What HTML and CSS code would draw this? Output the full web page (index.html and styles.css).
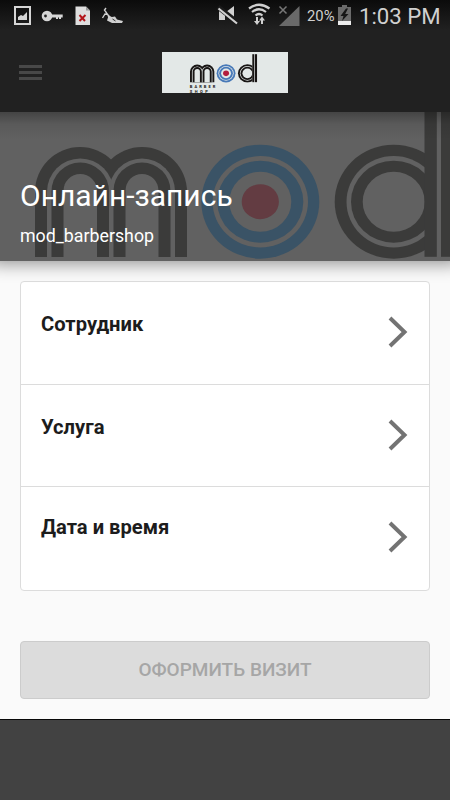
FILE: index.html
```html
<!DOCTYPE html>
<html lang="ru">
<head>
<meta charset="utf-8">
<title>Онлайн-запись</title>
<link rel="stylesheet" href="styles.css">
</head>
<body>
<svg class="defs" width="0" height="0" aria-hidden="true">
  <defs>
    <clipPath id="base"><rect x="0" y="-40" width="480" height="185"/></clipPath>
    <clipPath id="bowl"><rect x="330" y="0" width="95" height="149"/></clipPath>
    <g id="brand">
      <g clip-path="url(#base)">
        <g class="ink">
          <rect x="35" y="35" width="90" height="180" rx="45"/>
          <rect x="97" y="35" width="90" height="180" rx="45"/>
        </g>
        <g class="paper">
          <rect x="47" y="46.500" width="66.500" height="200" rx="33.200"/>
          <rect x="109" y="46.500" width="66" height="200" rx="33"/>
        </g>
        <g class="ink">
          <rect x="51.500" y="50.500" width="57.500" height="200" rx="28.700"/>
          <rect x="113.500" y="50.500" width="57" height="200" rx="28.500"/>
        </g>
        <g class="paper">
          <rect x="63.500" y="62" width="33.500" height="200" rx="16.700"/>
          <rect x="125.500" y="62" width="33" height="200" rx="16.500"/>
        </g>
      </g>
      <ellipse class="blue" cx="260.300" cy="89.700" rx="59" ry="57"/>
      <ellipse class="paper" cx="260.300" cy="89.700" rx="47.700" ry="45.700"/>
      <ellipse class="blue" cx="260.300" cy="89.700" rx="43" ry="41"/>
      <ellipse class="paper" cx="260.300" cy="89.700" rx="31" ry="30"/>
      <ellipse class="red" cx="260.300" cy="89.700" rx="18.600" ry="17.500"/>
      <g clip-path="url(#bowl)">
        <ellipse class="ink" cx="393.700" cy="89.700" rx="59" ry="57"/>
        <ellipse class="paper" cx="393.700" cy="89.700" rx="47.200" ry="45.700"/>
        <ellipse class="ink" cx="393.700" cy="89.700" rx="42.700" ry="41"/>
        <ellipse class="paper" cx="393.700" cy="89.700" rx="31" ry="30"/>
      </g>
      <g class="ink">
        <rect x="424.500" y="-30" width="12.300" height="174.800"/>
        <rect x="441" y="-30" width="13" height="174.800"/>
      </g>
    </g>
  </defs>
</svg>
<div class="screen">
  <div class="status">
    <svg class="notes" width="130" height="32" viewBox="0 0 130 32">
      <rect x="15" y="7" width="15" height="17" fill="none" stroke="#d6d6d6" stroke-width="2"/>
      <path d="M18 20v-3l3-2 2 1 4-4v8z" fill="#d6d6d6"/>
      <circle cx="47" cy="16" r="5.300" fill="#d6d6d6"/><circle cx="45.500" cy="16" r="1.400" fill="#202020"/>
      <path d="M51 14.500h11.700v3H61v1.500h-2v-1.500h-1V19h-2v-1.500h-5z" fill="#d6d6d6"/>
      <path d="M75.500 6.500H86l4 4V25H75.500z" fill="#dedede"/><path d="M86 6.500v4h4" fill="#999"/>
      <path d="M79.500 15l5.500 6M85.500 15l-6 6" stroke="#b3161b" stroke-width="2"/>
      <path d="M106 8l-1.500 2 3.500 5 1.500 4M102.500 18l2.500-4 3 .5M108 15l4 4" fill="none" stroke="#d0d0d0" stroke-width="1.400"/>
      <path d="M108.500 16l3.500 1 3-.5 2 3 6 1.500-1 2h-10l-5-2.500z" fill="#d0d0d0"/><path d="M112.500 19l3 2" stroke="#333" stroke-width="1"/>
    </svg>
    <svg class="signals" width="103" height="32" viewBox="215 0 103 32">
      <path d="M219 10.500h6v9.500h-6zM226 12l8-6v14l-8-5z" fill="#d0d0d0"/>
      <path d="M218 7l19.500 15.500" stroke="#1a1a1a" stroke-width="5"/><path d="M218.500 8.500L237 23.500" stroke="#d0d0d0" stroke-width="2.200"/>
      <g fill="none" stroke="#d0d0d0" stroke-width="2.200"><path d="M249 8.500q10-7.500 20.500 0M252 12q7-5.500 14 0M255.500 15.500q3.500-3 7 0"/></g>
      <path d="M257 17v5M262 24v-5" stroke="#d0d0d0" stroke-width="2"/><path d="M254 21h6l-3 4zM259 20.500h6l-3-4z" fill="#d0d0d0"/>
      <path d="M299.500 6v20H279z" fill="#696969"/><path d="M279.500 6.500l7 7M286.500 6.500l-7 7" stroke="#777" stroke-width="1.500"/>
    </svg>
    <span class="percent">20%</span>
    <svg class="battery" width="13" height="20" viewBox="0 0 13 20">
      <path d="M4 0h5v2h4v18H0V2h4z" fill="#6b6b6b"/><path d="M0 16h13v4H0z" fill="#ededed"/><path d="M8 3.500L2.500 11h3L4 16l6.500-7H7.200L10 3.500z" fill="#161616"/>
    </svg>
    <span class="clock">1:03 PM</span>
  </div>
  <header class="bar">
    <div class="menu"><i></i><i></i><i></i></div>
    <svg class="logo" width="126" height="41" viewBox="0 0 126 41">
      <use href="#brand" transform="translate(22.400 7) scale(.16)"/>
      <text class="tag" x="27.800" y="35.500" textLength="25.500">BARBER</text>
      <text class="tag" x="27.800" y="40.500" textLength="18">SHOP</text>
    </svg>
  </header>
  <section class="hero">
    <svg class="cover" width="450" height="149" viewBox="0 0 450 149"><use href="#brand"/></svg>
    <div class="caption">
      <h1>Онлайн-запись</h1>
      <p>mod_barbershop</p>
    </div>
  </section>
  <main>
    <ul class="list">
      <li><span>Сотрудник</span><svg width="20" height="32" viewBox="0 0 20 32"><path d="M2 2l14.500 14L2 30"/></svg></li>
      <li><span>Услуга</span><svg width="20" height="32" viewBox="0 0 20 32"><path d="M2 2l14.500 14L2 30"/></svg></li>
      <li><span>Дата и время</span><svg width="20" height="32" viewBox="0 0 20 32"><path d="M2 2l14.500 14L2 30"/></svg></li>
    </ul>
    <button class="submit" disabled>ОФОРМИТЬ ВИЗИТ</button>
  </main>
  <footer></footer>
</div>
</body>
</html>
```
FILE: styles.css
```css
* { box-sizing: border-box; }
body { margin: 0; font-family: Roboto, "Noto Sans", sans-serif; }
.defs { position: absolute; }
.screen { width: 450px; height: 800px; display: flex; flex-direction: column; overflow: hidden; background: #fafafa; }
.ink { fill: var(--ink); }
.paper { fill: var(--paper); }
.blue { fill: var(--blue); }
.red { fill: var(--red); }

.status { height: 34px; flex: none; display: flex; align-items: flex-start; background: linear-gradient(#0b0b0b, #212121 30px); color: #d0d0d0; white-space: nowrap; }
.notes { margin-right: 85px; flex: none; }
.signals { flex: none; margin-right: -11px; }
.percent { width: 31px; font-size: 14.8px; line-height: 33px; }
.battery { flex: none; margin-top: 5px; }
.clock { margin-left: 8px; font-size: 22.2px; line-height: 33px; }

.bar { height: 78px; flex: none; display: flex; align-items: flex-start; background: #212121; }
.menu { width: 23px; margin: 31px 0 0 19px; display: grid; gap: 3px; }
.menu i { height: 3px; background: #484848; }
.logo { --ink: #181514; --paper: #e3e8e7; --blue: #4779b8; --red: #b31d3e; background: #e3e8e7; margin: 18px 0 0 120px; }
.tag { font: 700 4px Roboto, sans-serif; fill: #181514; }

.hero { --ink: #3b3b3a; --paper: #616161; --blue: #3a5366; --red: #633c42; height: 149px; flex: none; display: grid; position: relative; z-index: 1; background: #616161; box-shadow: 0 -7px 16px 10px rgba(0,0,0,.42); clip-path: inset(0 0 -30px 0); }
.hero > * { grid-area: 1 / 1; }
.cover { display: block; }
.hero::after { content: ""; grid-area: 1 / 1; background: linear-gradient(rgba(0,0,0,.3), rgba(0,0,0,.08) 12px, transparent 28px); }
.caption { color: #fff; padding: 66px 20px 0; z-index: 1; }
h1 { margin: 0; font-size: 30px; font-weight: 400; line-height: 36px; white-space: nowrap; }
p { margin: 10px 0 0; font-size: 17.8px; line-height: 23px; }

main { height: 458px; flex: none; padding: 20px 20px 0; }
.list { list-style: none; margin: 0; padding: 0; height: 310px; display: grid; grid-template-rows: 103px 102px 103px; background: #fff; border: 1px solid #dcdcdc; border-radius: 4px; }
.list li { display: flex; justify-content: space-between; align-items: flex-start; padding: 30px 21px 0 20px; border-bottom: 1px solid #dcdcdc; }
.list li:last-child { border-bottom: 0; padding-top: 28px; }
.list span { font-size: 20.2px; font-weight: 700; line-height: 24px; color: #1c1c1c; }
.list svg { margin-top: 4px; fill: none; stroke: #737373; stroke-width: 4px; }
.list li:last-child svg { margin-top: 6px; }
.submit { display: block; width: 410px; height: 58px; margin-top: 50px; padding: 0 0 1px; border: 1px solid #ccc; border-radius: 4px; background: #dcdcdc; color: #a6a6a6; font: 500 19px Roboto, sans-serif; }
footer { flex: 1; background: #424242; border-top: 1px solid #080808; }
```
